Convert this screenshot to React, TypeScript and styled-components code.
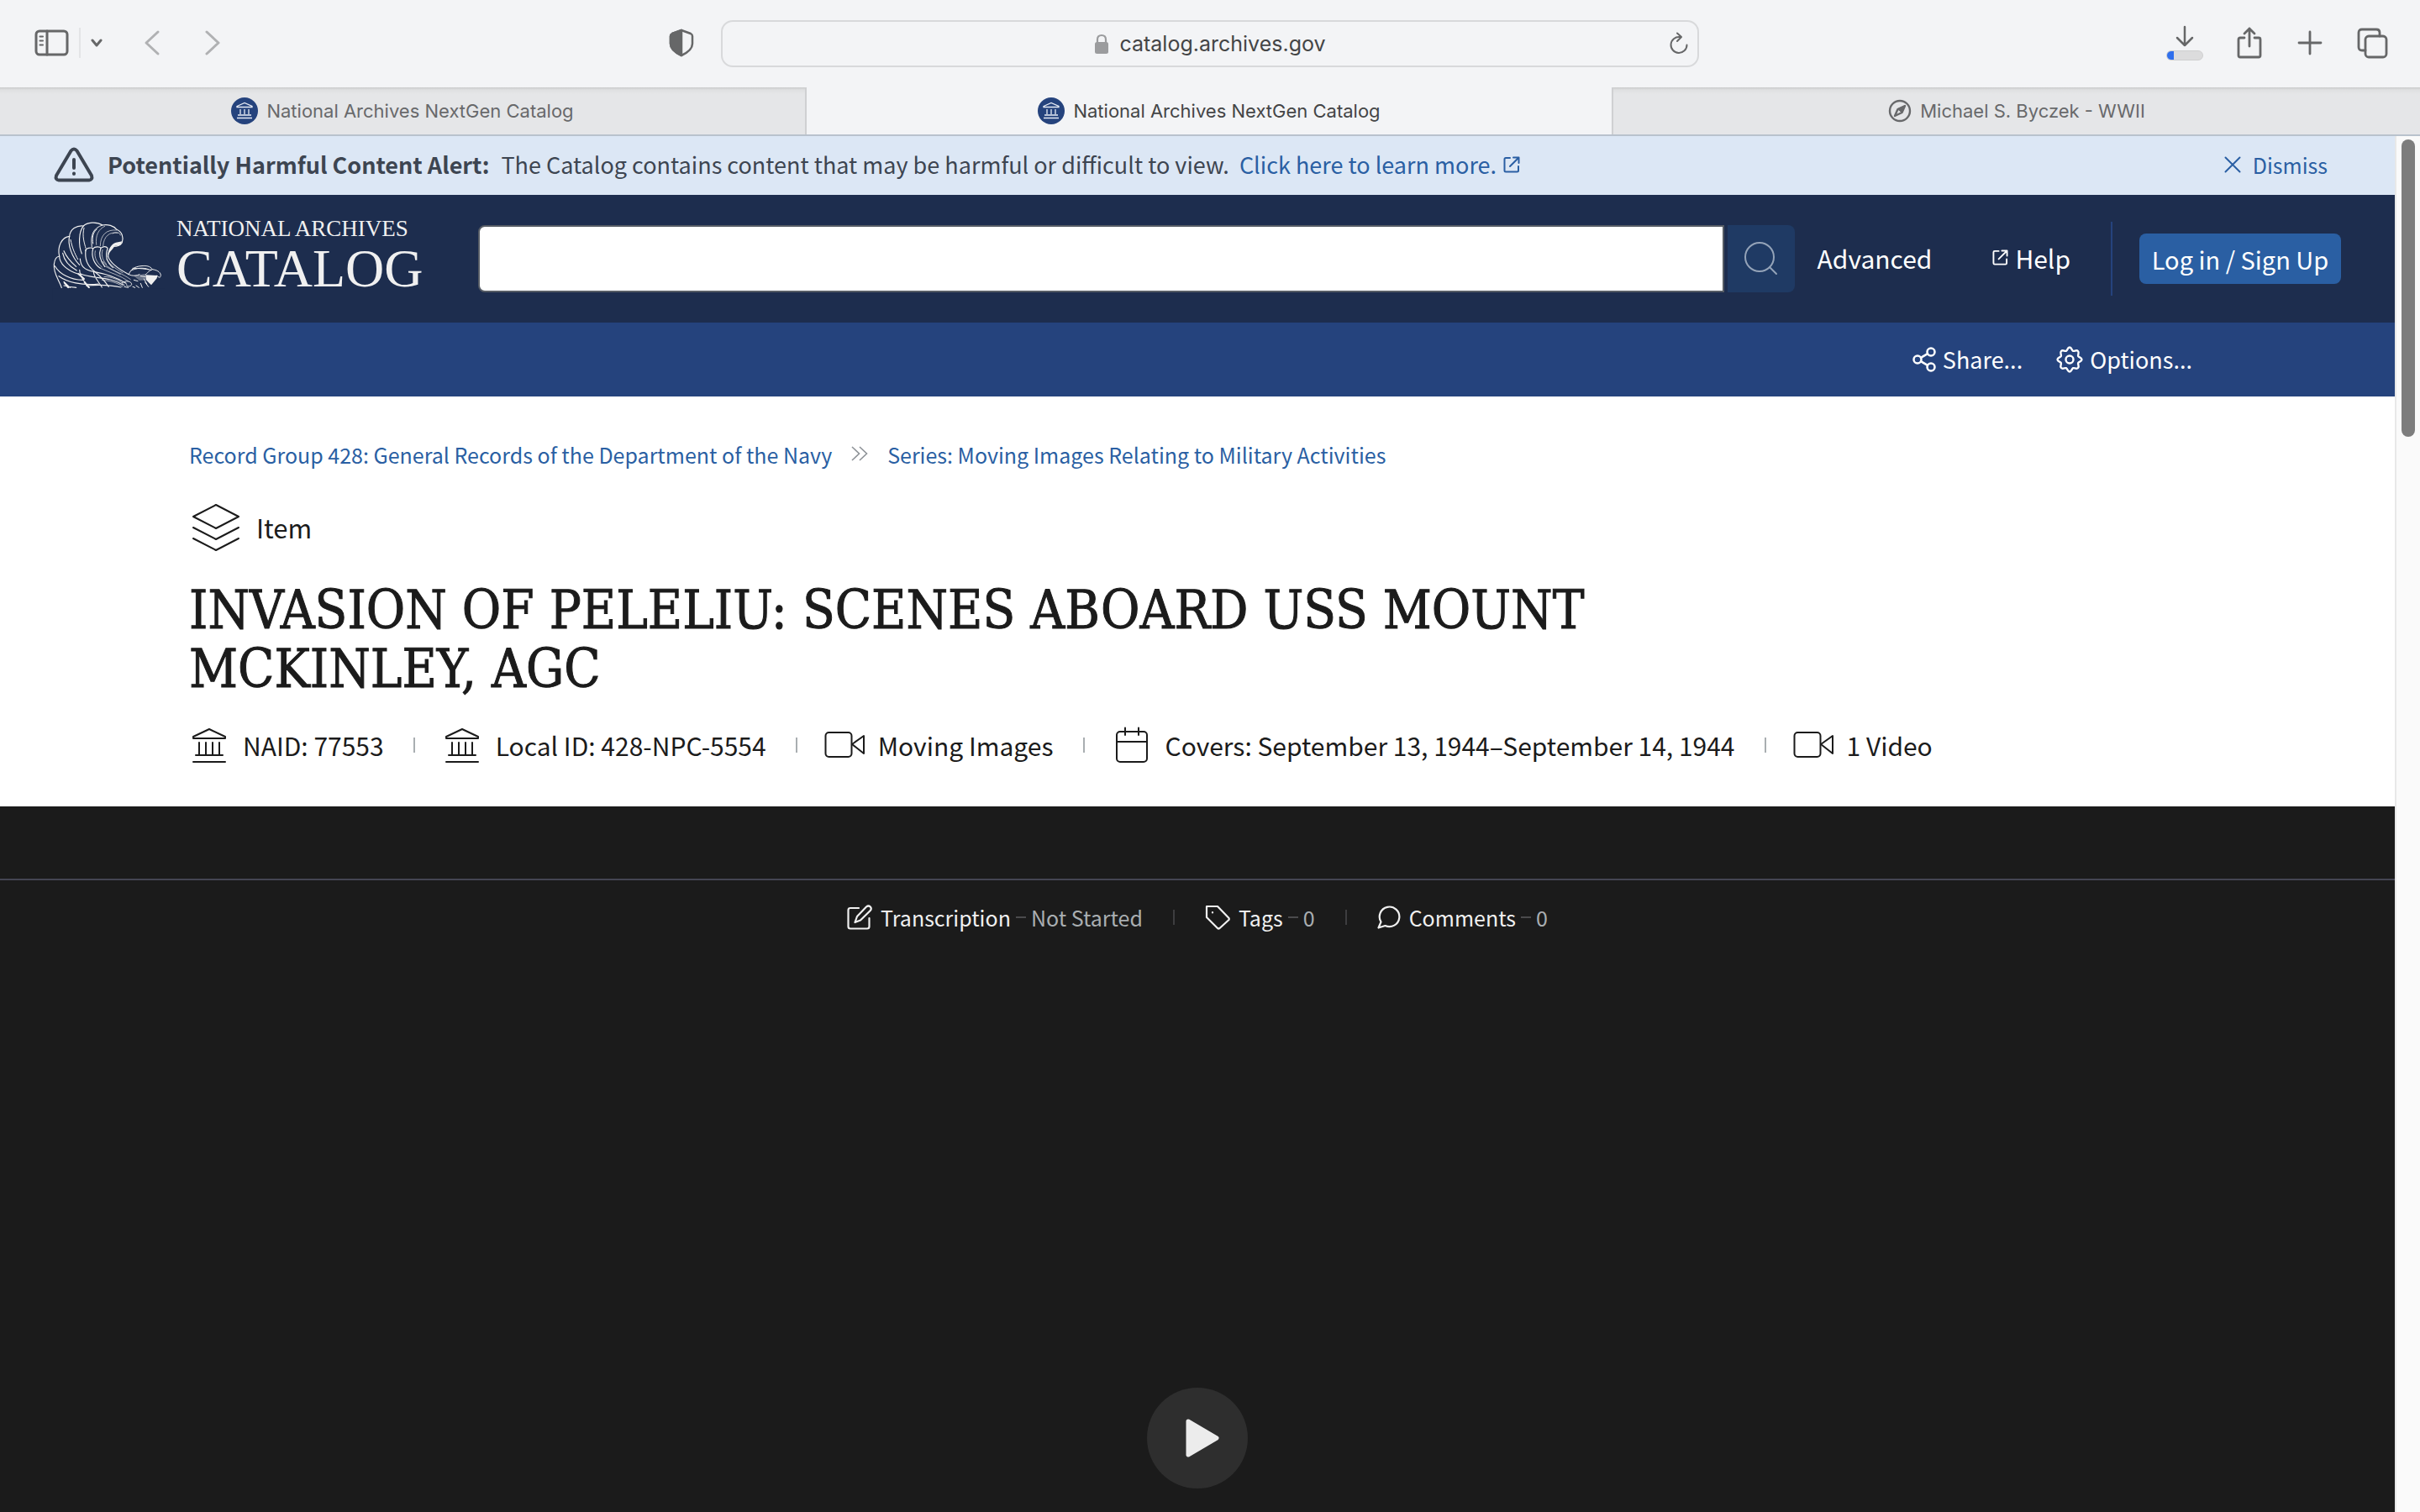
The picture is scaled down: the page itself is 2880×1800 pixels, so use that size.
import React from "react";
import styled, { createGlobalStyle, css } from "styled-components";

const sans = `"Noto Sans CJK SC", "Noto Sans", sans-serif`;
const ui = `Inter, "Liberation Sans", sans-serif`;
const serif = `"DejaVu Serif Condensed", "DejaVu Serif", serif`;
const roman = `"Liberation Serif", serif`;

const Global = createGlobalStyle`
  *, *::before, *::after { box-sizing: border-box; }
  body { margin: 0; background: #1b1b1b; }
  button { border: 0; padding: 0; background: none; color: inherit; font: inherit; cursor: pointer; }
  a { color: inherit; text-decoration: none; }
  svg { display: block; flex: none; }
`;

const Window = styled.div`
  display: flex;
  flex-direction: column;
  min-height: 100vh;
  font-family: ${sans};
  color: #1b1b1b;
`;

/* ---------- browser chrome ---------- */

const Toolbar = styled.div`
  display: grid;
  grid-template-columns: 1fr minmax(0, 1164px) 1fr;
  align-items: center;
  height: 104px;
  background: #f3f4f6;
  color: #666768;
  font-family: ${ui};
`;

const ToolGroup = styled.div<{ $end?: boolean }>`
  display: flex;
  align-items: center;
  padding-bottom: 2px;
  ${(p) =>
    p.$end
      ? css`
          justify-content: flex-end;
          gap: 40px;
          padding-right: 38px;
        `
      : css`
          gap: 12px;
          padding-left: 40px;
          padding-right: 32px;
        `}
`;

const ToolButton = styled.button<{ $dim?: boolean }>`
  display: flex;
  color: ${(p) => (p.$dim ? "#b0b1b3" : "#666768")};
`;

const ToolDivider = styled.span`
  width: 2px;
  height: 36px;
  background: #e3e4e6;
`;

const History = styled.div`
  display: flex;
  gap: 50px;
  margin: 0 auto 0 36px;
`;

const Address = styled.div`
  display: grid;
  grid-template-columns: 1fr auto 1fr;
  align-items: center;
  height: 56px;
  padding: 0 10px;
  border: 2px solid #d8d9db;
  border-radius: 14px;
`;

const AddressText = styled.div`
  grid-column: 2;
  display: flex;
  align-items: center;
  gap: 12px;
  font-size: 25px;
  line-height: 32px;
  color: #444546;
`;

const Reload = styled(ToolButton)`
  justify-self: end;
`;

const Download = styled(ToolButton)`
  flex-direction: column;
  align-items: center;
  gap: 4px;
`;

const Progress = styled.span`
  width: 44px;
  height: 12px;
  border: 1px solid #cfcfd0;
  border-radius: 6px;
  background: linear-gradient(to right, #2f6fed 8px, #dcdcdd 8px);
`;

const TabBar = styled.div`
  display: grid;
  grid-template-columns: repeat(3, 1fr);
  height: 58px;
  border-bottom: 2px solid #b9c2cd;
  font-family: ${ui};
`;

const Tab = styled.button<{ $active?: boolean }>`
  display: flex;
  align-items: center;
  justify-content: center;
  gap: 10px;
  font-size: 22px;
  line-height: 28px;
  color: #68696b;
  background: linear-gradient(#c9cacb, #dfe0e1 3px, #e5e6e8 8px);
  border-right: 2px solid #cfd0d2;
  &:last-child {
    border-right: 0;
  }
  ${(p) =>
    p.$active &&
    css`
      color: #444546;
      background: #f3f4f6;
    `}
`;

/* ---------- page ---------- */

const Viewport = styled.div`
  display: flex;
  flex: 1;
`;

const Page = styled.div`
  display: flex;
  flex-direction: column;
  flex: 1;
  min-width: 0;
`;

const ScrollTrack = styled.div`
  width: 30px;
  padding: 4px 4px 0 6px;
  border-left: 2px solid #e8e8e8;
  background: #fafafa;
`;

const ScrollThumb = styled.div`
  width: 16px;
  height: 354px;
  border-radius: 8px;
  background: #7d7d7d;
`;

const Alert = styled.div`
  display: flex;
  align-items: center;
  height: 70px;
  padding: 0 80px 2px 64px;
  background: #dce7f5;
  color: #3d4551;
  font-size: 27px;
  line-height: 40px;
`;

const AlertTitle = styled.strong`
  margin: 0 14px 0 16px;
  font-weight: 700;
`;

const AlertLink = styled.a`
  display: flex;
  align-items: center;
  gap: 8px;
  margin-left: 12px;
  color: #2a5fa3;
`;

const Dismiss = styled.button`
  display: flex;
  align-items: center;
  gap: 14px;
  margin-left: auto;
  color: #2a5fa3;
  font-size: 25px;
`;

const Header = styled.header`
  display: flex;
  align-items: center;
  height: 152px;
  padding: 0 64px 0 56px;
  background: #1d2d4e;
  color: #fff;
  font-size: 30px;
  line-height: 44px;
`;

const Brand = styled.a`
  display: flex;
  align-items: center;
  gap: 10px;
  width: 513px;
`;

const BrandWords = styled.span`
  display: flex;
  flex-direction: column;
  padding-bottom: 8px;
  font-family: ${roman};
  color: #f0f0f0;
`;

const BrandTop = styled.span`
  font-size: 27px;
  line-height: 32px;
`;

const BrandMain = styled.span`
  font-size: 64px;
  line-height: 64px;
`;

const SearchForm = styled.form`
  display: flex;
  flex: 1;
  gap: 4px;
`;

const SearchInput = styled.input`
  flex: 1;
  min-width: 0;
  height: 80px;
  padding: 0 24px;
  border: 2px solid #565c65;
  border-radius: 8px 0 0 8px;
  background: #fff;
  font: 30px/44px ${sans};
`;

const SearchButton = styled.button`
  display: flex;
  align-items: center;
  justify-content: center;
  width: 80px;
  background: #1f3a64;
  border-radius: 0 8px 8px 0;
  color: #94a3b8;
`;

const HeaderLink = styled.a`
  display: flex;
  align-items: center;
  gap: 8px;
  margin-left: 27px;
  padding-bottom: 3px;
  & + & {
    margin-left: 72px;
  }
`;

const HeaderRule = styled.span`
  width: 2px;
  height: 88px;
  margin: 0 32px 0 48px;
  background: #25437d;
`;

const Login = styled.button`
  width: 240px;
  height: 60px;
  border-radius: 8px;
  background: #2a5fa3;
  font-size: 29px;
`;

const ActionBar = styled.div`
  display: flex;
  align-items: center;
  justify-content: flex-end;
  gap: 40px;
  height: 88px;
  padding-right: 241px;
  background: #25437d;
  color: #fff;
  font-size: 27px;
  line-height: 40px;
`;

const Action = styled.button`
  display: flex;
  align-items: center;
  gap: 8px;
`;

const Summary = styled.section`
  display: flex;
  flex-direction: column;
  padding: 49px 225px 51px;
  background: #fff;
`;

const Crumbs = styled.nav`
  display: flex;
  align-items: center;
  gap: 23px;
  font-size: 25px;
  line-height: 40px;
  color: #2a5fa3;
`;

const Kind = styled.div`
  display: flex;
  align-items: center;
  gap: 20px;
  margin-top: 37px;
  font-size: 31px;
  line-height: 60px;
`;

const Title = styled.h1`
  max-width: 1760px;
  margin: 34px 0 0;
  font-family: ${serif};
  font-size: 63px;
  font-weight: 400;
  line-height: 70px;
  -webkit-text-stroke: 1px currentColor;
`;

const Facts = styled.ul`
  display: flex;
  align-items: center;
  margin: 33px 0 0;
  padding: 0;
  list-style: none;
  font-size: 30px;
  line-height: 44px;
`;

const Fact = styled.li`
  display: flex;
  align-items: center;
  gap: 16px;
  & + &::before {
    content: "";
    width: 2px;
    height: 18px;
    margin: 0 16px 0 35px;
    background: #a9aeb1;
  }
`;

const Viewer = styled.main`
  display: flex;
  flex-direction: column;
  flex: 1;
  background: #1b1b1b;
  color: #f0f0f0;
`;

const ContributeBar = styled.div`
  display: flex;
  align-items: center;
  justify-content: center;
  margin-top: 86px;
  height: 92px;
  padding-bottom: 2px;
  border-top: 2px solid #444552;
  font-size: 25px;
  line-height: 40px;
`;

const Contribute = styled.button`
  display: flex;
  align-items: center;
  gap: 10px;
  & + &::before {
    content: "";
    width: 2px;
    height: 18px;
    margin: 0 26px 0 36px;
    background: #3d3d3f;
  }
`;

const Status = styled.span`
  display: flex;
  align-items: center;
  gap: 6px;
  margin-left: -4px;
  color: #a9aeb1;
  &::before {
    content: "";
    width: 12px;
    height: 2px;
    background: #4a4a4c;
  }
`;

const Stage = styled.div`
  display: flex;
  flex: 1;
  justify-content: center;
  align-items: flex-end;
  padding-bottom: 28px;
`;

const Play = styled.button`
  display: flex;
  align-items: center;
  justify-content: center;
  width: 120px;
  height: 120px;
  padding-left: 12px;
  border-radius: 50%;
  background: #2e2e2e;
`;

/* ---------- drawings ---------- */

type IconProps = { w: number; h: number; sw?: number; children: React.ReactNode; box?: string };

const Icon = ({ w, h, sw = 2, children, box }: IconProps) => (
  <svg
    width={w}
    height={h}
    viewBox={box || `0 0 ${w} ${h}`}
    fill="none"
    stroke="currentColor"
    strokeWidth={sw}
    strokeLinecap="round"
    strokeLinejoin="round"
    aria-hidden="true"
  >
    {children}
  </svg>
);

const Building = () => (
  <Icon w={48} h={44} sw={2}>
    <path d="M5 12 L24 3 L43 12 V14 H5 V12 Z M12 19 V33 M20 19 V33 M28 19 V33 M36 19 V33 M8 34 H40 M5 42 H43" />
  </Icon>
);

const FavIcon = () => (
  <svg width="32" height="32" viewBox="0 0 32 32" aria-hidden="true">
    <circle cx="16" cy="16" r="16" fill="#25437d" />
    <path
      d="M7 10.5 L16 6.5 L25 10.5 V11.5 H7 Z M11 14 V20 M16 14 V20 M21 14 V20 M8 21 H24 M7 24.5 H25"
      fill="none"
      stroke="#e6ebf5"
      strokeWidth="1.3"
    />
  </svg>
);

const Video = () => (
  <Icon w={48} h={34} sw={2}>
    <rect x="1.500" y="2" width="31" height="29" rx="4" />
    <path d="M33 16 L47 6 V27 Z" />
  </Icon>
);

const External = ({ size }: { size: number }) => (
  <Icon w={size} h={size} box="0 0 20 20" sw={2}>
    <path d="M8 2 H3 Q1.500 2 1.500 3.500 V17 Q1.500 18.500 3 18.500 H16.500 Q18 18.500 18 17 V12 M12 1.500 H18.500 V8 M18 2 L8 12" />
  </Icon>
);

const Eagle = () => (
  <svg width="144" height="100" viewBox="0 0 432 300" fill="none" stroke="#f0f0f0" strokeWidth="3.500" strokeLinecap="round" aria-hidden="true">
    <path d="M52 254 C42 222 22 204 25 170 C27 152 35 142 44 141 C36 108 52 72 80 70 C82 44 106 30 130 33 C142 20 176 16 198 30 C216 26 238 32 249 46 C268 54 274 74 268 92 C262 104 246 106 236 106 C224 112 218 124 218 142" />
    <path d="M130 33 C112 54 112 104 124 132 M80 70 C72 100 90 146 116 172" />
    <path d="M198 30 C164 40 154 66 160 108 M178 44 C164 56 160 72 164 96" strokeWidth="3" />
    <path d="M206 34 C184 44 172 66 176 100 M249 48 C212 44 190 66 190 104 M252 58 C224 52 202 70 200 104 M262 66 C262 54 242 54 234 60" strokeWidth="2" />
    <path d="M44 141 C44 166 70 192 110 204 M56 130 C62 160 84 180 106 192 M60 122 C70 146 88 164 104 178" />
    <path d="M84 82 C90 112 98 130 110 152 M132 40 C124 70 134 96 138 112" strokeWidth="3" />
    <path d="M138 122 C136 112 158 108 164 114 C172 104 190 108 192 112 C202 104 212 106 216 112" />
    <path d="M138 118 C134 150 144 176 168 194 C182 206 200 220 220 250 M164 114 C156 144 170 170 190 184 M192 112 C182 138 192 160 206 178 M216 114 C206 142 214 164 236 182" />
    <path d="M172 122 C166 148 182 168 196 180 M198 118 C192 142 200 156 212 170" strokeWidth="2" />
    <path d="M218 142 C226 166 254 186 292 206" />
    <path d="M218 142 C220 126 232 120 242 104 L262 102 L268 88 L246 92 C230 96 216 118 218 142 Z" fill="#f0f0f0" stroke="none" />
    <path d="M118 150 C120 176 132 190 166 196 C210 204 246 214 282 238 M116 190 C116 214 134 232 146 250 M166 196 C166 216 186 234 196 252 M120 204 C160 222 224 212 272 244" />
    <path d="M28 176 C44 204 84 226 128 226 M42 212 C72 234 124 246 184 240 M60 232 L82 253 M60 246 C90 254 100 252 104 253 M140 246 C186 242 230 244 264 252" />
    <path d="M190 184 C226 200 262 210 290 230 M206 176 C236 194 270 202 298 224 M196 226 C220 228 250 234 270 250 M212 152 C226 170 240 184 270 200 M200 160 C212 180 236 190 262 206 M204 214 C232 214 258 226 278 246" strokeWidth="2" />
    <path d="M112 204 L132 222 M134 234 L150 253 M62 236 L76 253" strokeWidth="6" />
    <path d="M292 206 C298 188 312 178 336 176 C354 174 368 176 376 188 C390 190 404 196 406 208 C406 220 398 218 392 210 M306 184 C330 184 350 186 372 190 M376 188 C362 194 358 202 352 206 M300 192 C316 184 344 180 362 188 M292 206 C306 214 322 210 330 206 M334 212 L350 214" strokeWidth="3" />
    <path d="M308 210 L350 204 L362 226 L330 228 Z" fill="#f0f0f0" fillOpacity="0.35" stroke="none" />
    <path d="M352 208 L394 210 L392 220 L372 244 L364 236 L354 226 Z" fill="#f0f0f0" stroke="none" />
    <path d="M268 236 C280 226 302 230 302 242 C298 252 280 250 284 242 M310 226 L324 230 M334 238 L340 253 M350 234 L362 250 M318 246 L328 253 M346 222 L356 240 M306 250 L314 253 M276 250 L290 253" strokeWidth="3" />
    <path d="M20 256 H420 V300 H20 Z" fill="#1d2d4e" stroke="none" />
  </svg>
);

export default function App() {
  return (
    <Window>
      <Global />
      <Toolbar>
        <ToolGroup>
          <ToolButton aria-label="Sidebar">
            <Icon w={42} h={34} sw={3}>
              <rect x="3" y="3" width="37" height="28" rx="4" />
              <path d="M16 3 V31" />
              <path d="M7.500 9.500 H11 M7.500 14.500 H11 M7.500 19.500 H11" strokeWidth="2" />
            </Icon>
          </ToolButton>
          <ToolDivider />
          <ToolButton aria-label="Tab groups">
            <Icon w={14} h={12} sw={3}>
              <path d="M2 3 L7 9 L12 3" />
            </Icon>
          </ToolButton>
          <History>
            <ToolButton $dim aria-label="Back">
              <Icon w={22} h={32} sw={3}>
                <path d="M18 3 L4 16 L18 29" />
              </Icon>
            </ToolButton>
            <ToolButton $dim aria-label="Forward">
              <Icon w={22} h={32} sw={3}>
                <path d="M4 3 L18 16 L4 29" />
              </Icon>
            </ToolButton>
          </History>
          <ToolButton aria-label="Privacy report">
            <Icon w={30} h={34} sw={2.5}>
              <path d="M15 2 L26 6 Q28 7 28 9 V18 Q28 26 15 32 Q2 26 2 18 V9 Q2 7 4 6 Z" />
              <path d="M15 2 L4 6 Q2 7 2 9 V18 Q2 26 15 32 Z" fill="currentColor" />
            </Icon>
          </ToolButton>
        </ToolGroup>
        <Address>
          <AddressText>
            <svg width="18" height="24" viewBox="0 0 18 24" fill="none" aria-hidden="true">
              <rect x="1" y="10" width="16" height="14" rx="2.500" fill="#9b9c9e" />
              <path d="M4 11 V7 Q4 2 9 2 Q14 2 14 7 V11" stroke="#9b9c9e" strokeWidth="2.200" />
            </svg>
            catalog.archives.gov
          </AddressText>
          <Reload aria-label="Reload">
            <Icon w={24} h={28} sw={2}>
              <path d="M13 6 A 9.500 9.500 0 1 0 21.500 15.500 M10 1.500 L15 6 L10 11" />
            </Icon>
          </Reload>
        </Address>
        <ToolGroup $end>
          <Download aria-label="Downloads">
            <Icon w={24} h={26} sw={2.5}>
              <path d="M12 2 V24 M3 15 L12 24 L21 15" />
            </Icon>
            <Progress />
          </Download>
          <ToolButton aria-label="Share page">
            <Icon w={32} h={38} sw={2.8}>
              <path d="M9 13 H4 Q2 13 2 15 V34 Q2 36 4 36 H26 Q28 36 28 34 V15 Q28 13 26 13 H21 M15 23 V2 M9 8 L15 2 L21 8" />
            </Icon>
          </ToolButton>
          <ToolButton aria-label="New tab">
            <Icon w={30} h={30} sw={2.8}>
              <path d="M15 2 V28 M2 15 H28" />
            </Icon>
          </ToolButton>
          <ToolButton aria-label="Tab overview">
            <Icon w={38} h={38} sw={2.8}>
              <rect x="11" y="11" width="25" height="25" rx="4" />
              <path d="M11 28 H7 Q3 28 3 24 V7 Q3 3 7 3 H24 Q28 3 28 7 V11" />
            </Icon>
          </ToolButton>
        </ToolGroup>
      </Toolbar>
      <TabBar>
        <Tab>
          <FavIcon />
          National Archives NextGen Catalog
        </Tab>
        <Tab $active>
          <FavIcon />
          National Archives NextGen Catalog
        </Tab>
        <Tab>
          <Icon w={28} h={28} sw={2.4}>
            <circle cx="14" cy="14" r="12" />
            <path d="M20 8 L16.500 16 L8 20 L11.500 12 Z" />
            <path d="M20 8 L16.500 16 L11.500 12 Z" fill="currentColor" strokeWidth="1" />
          </Icon>
          Michael S. Byczek - WWII
        </Tab>
      </TabBar>
      <Viewport>
        <Page>
          <Alert>
            <Icon w={48} h={42} sw={4}>
              <path d="M20.500 4.500 Q24 0.500 27.500 4.500 L45 34 Q46.500 39 42 39.500 H6 Q1.500 39 3 34 Z M24 15 V25 M24 31.500 V32" />
            </Icon>
            <AlertTitle>Potentially Harmful Content Alert:</AlertTitle>
            <span>The Catalog contains content that may be harmful or difficult to view.</span>
            <AlertLink href="#learn">
              Click here to learn more.
              <External size={20} />
            </AlertLink>
            <Dismiss>
              <Icon w={20} h={20} sw={2}>
                <path d="M1.500 1.500 L18.500 18.500 M18.500 1.500 L1.500 18.500" />
              </Icon>
              Dismiss
            </Dismiss>
          </Alert>
          <Header>
            <Brand href="#home">
              <Eagle />
              <BrandWords>
                <BrandTop>NATIONAL ARCHIVES</BrandTop>
                <BrandMain>CATALOG</BrandMain>
              </BrandWords>
            </Brand>
            <SearchForm onSubmit={(e) => e.preventDefault()}>
              <SearchInput type="text" aria-label="Search the catalog" />
              <SearchButton aria-label="Search">
                <Icon w={42} h={42} sw={2}>
                  <circle cx="19" cy="19" r="17" />
                  <path d="M31 31 L39 39" />
                </Icon>
              </SearchButton>
            </SearchForm>
            <HeaderLink href="#advanced">Advanced</HeaderLink>
            <HeaderLink href="#help">
              <External size={19} />
              Help
            </HeaderLink>
            <HeaderRule />
            <Login>Log in / Sign Up</Login>
          </Header>
          <ActionBar>
            <Action>
              <Icon w={28} h={30} sw={2.5}>
                <circle cx="22" cy="6" r="4.500" />
                <circle cx="6" cy="15" r="4.500" />
                <circle cx="22" cy="24" r="4.500" />
                <path d="M10 12.800 L18 8.200 M10 17.200 L18 21.800" />
              </Icon>
              Share...
            </Action>
            <Action>
              <Icon w={32} h={32} sw={2.4}>
                <circle cx="16" cy="16" r="4.500" />
                <path d="M16 1.500 C18.500 1.500 18.500 5 20 5.800 C21.800 6.600 24 4 26 6 C28 8 25.400 10.200 26.200 12 C27 13.500 30.500 13.500 30.500 16 C30.500 18.500 27 18.500 26.200 20 C25.400 21.800 28 24 26 26 C24 28 21.800 25.400 20 26.200 C18.500 27 18.500 30.500 16 30.500 C13.500 30.500 13.500 27 12 26.200 C10.200 25.400 8 28 6 26 C4 24 6.600 21.800 5.800 20 C5 18.500 1.500 18.500 1.500 16 C1.500 13.500 5 13.500 5.800 12 C6.600 10.200 4 8 6 6 C8 4 10.200 6.600 12 5.800 C13.500 5 13.500 1.500 16 1.500 Z" />
              </Icon>
              Options...
            </Action>
          </ActionBar>
          <Summary>
            <Crumbs aria-label="Hierarchy">
              <a href="#group">Record Group 428: General Records of the Department of the Navy</a>
              <svg width="20" height="20" viewBox="0 0 20 20" fill="none" stroke="#8d9297" strokeWidth="1.600" aria-hidden="true">
                <path d="M1 1 L9.500 9 L1 17 M10 1 L18.500 9 L10 17" />
              </svg>
              <a href="#series">Series: Moving Images Relating to Military Activities</a>
            </Crumbs>
            <Kind>
              <Icon w={60} h={60} sw={2}>
                <path d="M32 3 L59 17 L32 31 L5 17 Z M5 30 L32 44 L59 30 M5 43 L32 57 L59 43" />
              </Icon>
              Item
            </Kind>
            <Title>INVASION OF PELELIU: SCENES ABOARD USS MOUNT MCKINLEY, AGC</Title>
            <Facts>
              <Fact>
                <Building />
                NAID: 77553
              </Fact>
              <Fact>
                <Building />
                Local ID: 428-NPC-5554
              </Fact>
              <Fact>
                <Video />
                Moving Images
              </Fact>
              <Fact>
                <Icon w={48} h={44} sw={2}>
                  <rect x="6" y="6" width="36" height="36" rx="4" />
                  <path d="M6 18 H42 M16 1.500 V10 M32 1.500 V10" />
                </Icon>
                Covers: September 13, 1944–September 14, 1944
              </Fact>
              <Fact>
                <Video />1 Video
              </Fact>
            </Facts>
          </Summary>
          <Viewer>
            <ContributeBar>
              <Contribute>
                <Icon w={30} h={30} sw={2.2}>
                  <path d="M14 4 H4 Q1.500 4 1.500 6.500 V26 Q1.500 28.500 4 28.500 H24 Q26.500 28.500 26.500 26 V16" />
                  <path d="M23 2.500 Q25.500 0.500 27.800 2.500 Q29.800 5 27.500 7.300 L16 18.500 L9.500 21 L12 14 Z" />
                </Icon>
                Transcription
                <Status>Not Started</Status>
              </Contribute>
              <Contribute>
                <Icon w={30} h={30} sw={2.2}>
                  <path d="M2 2 H15 L28.500 16 Q29 17 28.500 18 L17.500 28 Q16 29 15 28 L2 15 Z" />
                  <path d="M9 9 V9.500" />
                </Icon>
                Tags
                <Status>0</Status>
              </Contribute>
              <Contribute>
                <Icon w={28} h={28} sw={2.2}>
                  <path d="M1.500 26.500 L4.500 19.500 A 11.800 11.800 0 1 1 9.500 24 Z" />
                </Icon>
                Comments
                <Status>0</Status>
              </Contribute>
            </ContributeBar>
            <Stage>
              <Play aria-label="Play video">
                <svg width="42" height="48" viewBox="0 0 42 48" aria-hidden="true">
                  <path d="M4 4 L38 24 L4 44 Z" fill="#ececec" stroke="#ececec" strokeWidth="5" strokeLinejoin="round" />
                </svg>
              </Play>
            </Stage>
          </Viewer>
        </Page>
        <ScrollTrack>
          <ScrollThumb />
        </ScrollTrack>
      </Viewport>
    </Window>
  );
}
